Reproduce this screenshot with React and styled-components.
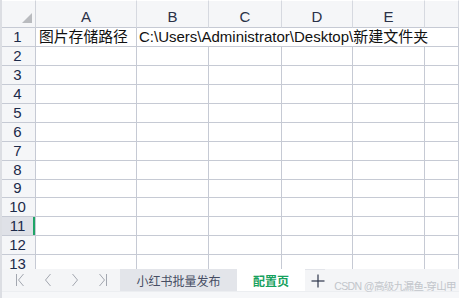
import styled, { createGlobalStyle } from "styled-components";

const GlobalStyle = createGlobalStyle`
  html, body {
    margin: 0;
    padding: 0;
    background: #f5f6f8;
  }
  body {
    font-family: "Liberation Sans", "Noto Sans CJK SC", sans-serif;
  }
`;

const COLS = ["A", "B", "C", "D", "E", ""];
const ROWS = Array.from({ length: 13 }, (_, i) => i + 1);
const ACTIVE_ROW = 11;

function Chevron({ dir, bar }) {
  const left = dir === "left";
  return (
    <svg width="12" height="14" viewBox="0 0 12 14" fill="none" stroke="#a3a7b0" strokeWidth="1">
      {left ? <polyline points="8.5,1 3.5,7 8.5,13" /> : <polyline points="3.5,1 8.5,7 3.5,13" />}
      {bar && (left ? <line x1="1.5" y1="1" x2="1.5" y2="13" /> : <line x1="10.5" y1="1" x2="10.5" y2="13" />)}
    </svg>
  );
}

export default function App() {
  return (
    <Page>
      <GlobalStyle />
      <Sheet>
        <Corner>
          <Triangle />
        </Corner>
        {COLS.map((c, i) => (
          <ColHead key={i}>{c}</ColHead>
        ))}
        {ROWS.map((r) => (
          <Row key={r}>
            <RowHead $active={r === ACTIVE_ROW}>{r}</RowHead>
            {COLS.map((c, i) => (
              <Cell key={i}>
                {r === 1 && i === 0 && "图片存储路径"}
                {r === 1 && i === 1 && (
                  <Overflow>C:\Users\Administrator\Desktop\新建文件夹</Overflow>
                )}
              </Cell>
            ))}
          </Row>
        ))}
      </Sheet>
      <TabBar>
        <Nav>
          <NavBtn><Chevron dir="left" bar /></NavBtn>
          <NavBtn><Chevron dir="left" /></NavBtn>
          <NavBtn><Chevron dir="right" /></NavBtn>
          <NavBtn><Chevron dir="right" bar /></NavBtn>
        </Nav>
        <Tab>小红书批量发布</Tab>
        <Tab $active>配置页</Tab>
        <AddBtn>
          <svg width="14" height="14" viewBox="0 0 14 14" stroke="#2e364b" strokeWidth="1.2">
            <line x1="7" y1="0.5" x2="7" y2="13.5" />
            <line x1="0.5" y1="7" x2="13.5" y2="7" />
          </svg>
        </AddBtn>
        <Watermark>CSDN @高级九漏鱼-穿山甲</Watermark>
      </TabBar>
      <StatusBar />
    </Page>
  );
}

const Page = styled.div`
  width: 459px;
  height: 298px;
  overflow: hidden;
  display: flex;
  flex-direction: column;
  border-left: 2px solid #dcdee3;
  box-sizing: border-box;
  background: #f5f6f8;
`;

const Sheet = styled.div`
  height: 269px;
  flex: none;
  overflow: hidden;
  display: grid;
  grid-template-columns: 34px 101px 72px 73px 71px 72px 1fr;
  grid-template-rows: 28px;
  grid-auto-rows: 18.95px;
  background: #fff;
  color: #1f2433;
`;

const Row = styled.div`
  display: contents;
`;

const Corner = styled.div`
  position: relative;
  background: #f5f6f8;
  border-right: 1px solid #d0d3da;
  border-bottom: 1px solid #c6cad4;
  border-top: 1px solid #fff;
`;

const Triangle = styled.div`
  position: absolute;
  right: 3px;
  bottom: 4px;
  width: 0;
  height: 0;
  border-left: 10px solid transparent;
  border-bottom: 10px solid #b9bbbf;
`;

const ColHead = styled.div`
  background: #f5f6f8;
  border-right: 1px solid #d6d9e0;
  border-bottom: 1px solid #c6cad4;
  border-top: 1px solid #fff;
  display: flex;
  align-items: flex-end;
  justify-content: center;
  padding-bottom: 1px;
  font-size: 15px;
  color: #2a3147;
  line-height: 18px;
`;

const RowHead = styled.div`
  background: ${(p) => (p.$active ? "#dfe1e7" : "#f5f6f8")};
  border-right: 1px solid #c6cad4;
  border-bottom: 1px solid #c6cad4;
  box-shadow: ${(p) => (p.$active ? "inset -2px 0 0 #1fa567" : "none")};
  display: flex;
  align-items: center;
  justify-content: center;
  font-size: 15px;
  color: #1c2a4a;
  padding-right: 2px;
  box-sizing: border-box;
  line-height: 18px;
`;

const Cell = styled.div`
  position: relative;
  border-right: 1px solid #c6cad4;
  border-bottom: 1px solid #c6cad4;
  display: flex;
  align-items: center;
  padding-left: 3px;
  font-size: 14.8px;
  white-space: nowrap;
  color: #111;
  line-height: 18px;
  min-width: 0;
`;

const Overflow = styled.span`
  position: absolute;
  left: 2px;
  top: 0;
  line-height: 18px;
  font-size: 15px;
  background: #fff;
  z-index: 1;
`;

const TabBar = styled.div`
  position: relative;
  height: 22px;
  flex: none;
  display: flex;
  align-items: stretch;
  background: #f4f5f7;
`;

const Nav = styled.div`
  width: 118px;
  display: flex;
  align-items: center;
  padding-left: 13px;
  gap: 15px;
  box-sizing: border-box;
`;

const NavBtn = styled.span`
  display: flex;
  width: 12px;
  justify-content: center;
`;

const Tab = styled.div`
  display: flex;
  align-items: center;
  justify-content: center;
  width: ${(p) => (p.$active ? "68px" : "117px")};
  box-sizing: border-box;
  font-size: 12px;
  background: ${(p) => (p.$active ? "#fff" : "#e3e5ea")};
  color: ${(p) => (p.$active ? "#17a15e" : "#464d63")};
  font-weight: ${(p) => (p.$active ? 700 : 400)};
  white-space: nowrap;
`;

const AddBtn = styled.div`
  display: flex;
  align-items: center;
  padding-left: 6px;
  border-top: 1px solid #e3e5ea;
`;

const Watermark = styled.div`
  position: absolute;
  right: 3px;
  bottom: -2px;
  font-size: 10.5px;
  letter-spacing: -0.6px;
  color: #c2c5cb;
  white-space: nowrap;
`;

const StatusBar = styled.div`
  flex: 1;
  background: #f6f7f9;
  border-top: 1px solid #eceef1;
`;
